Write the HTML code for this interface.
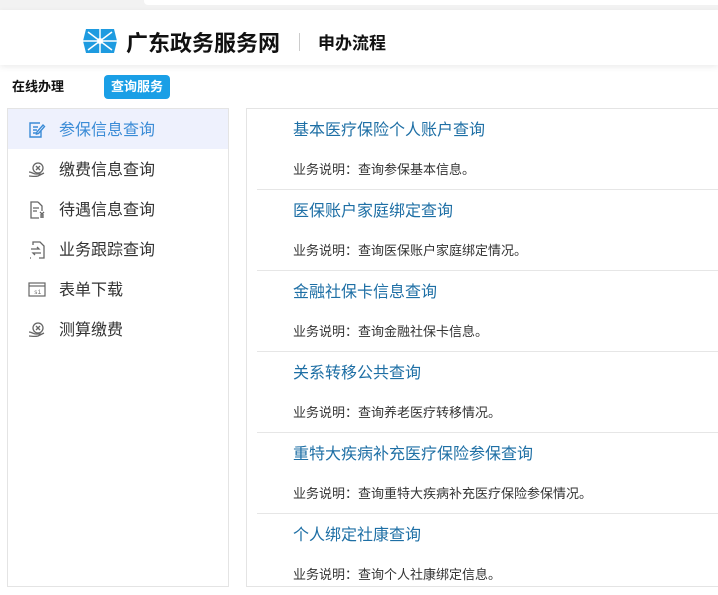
<!DOCTYPE html>
<html><head><meta charset="utf-8">
<style>
*{margin:0;padding:0;box-sizing:border-box}
body{width:718px;height:589px;overflow:hidden;background:#fff;font-family:"Liberation Sans","Noto Sans CJK SC",sans-serif;position:relative}
.top{position:absolute;left:0;top:0;width:718px;height:10px;background:#f2f2f2}
.top .b{position:absolute;left:144px;top:0;right:0;height:5px;background:#fff;border-radius:0 0 0 4px}
.hdr{position:absolute;left:0;top:10px;width:718px;height:55px;background:#fff;box-shadow:0 2px 6px rgba(0,0,0,.08)}
.logo{position:absolute;left:83px;top:19px}
.t1{position:absolute;left:126px;top:16px;font-size:22px;font-weight:bold;color:#111}
.sep{position:absolute;left:299px;top:23px;width:1px;height:18px;background:#ccc}
.t2{position:absolute;left:318px;top:19px;font-size:17px;font-weight:bold;color:#111}
.tab1{position:absolute;left:12px;top:76px;font-size:13px;font-weight:bold;color:#111}
.tab2{position:absolute;left:104px;top:75px;width:66px;height:24px;background:#1a9fe6;border-radius:4px;color:#fff;font-size:13px;font-weight:bold;text-align:center;line-height:24px}
.side{position:absolute;left:7px;top:108px;width:222px;height:479px;border:1px solid #e4e4e4}
.it{height:40px;position:relative;font-size:16px;color:#333;line-height:44px;padding-left:51px}
.it.on{background:#eef1fd;color:#3a8bd6}
.it svg{position:absolute;left:20px;top:12px}
.main{position:absolute;left:246px;top:108px;width:480px;height:479px;border:1px solid #e4e4e4;border-right:none}
.row{position:absolute;left:10px;width:470px;height:81px;border-bottom:1px solid #e6e6e6}
.row .h{position:absolute;left:36px;top:7px;font-size:16px;color:#1e6fa5}
.row .d{position:absolute;left:36px;top:50px;font-size:13px;color:#333}
</style></head><body>
<div class="top"><div class="b"></div></div>
<div class="hdr">
<svg class="logo" width="34" height="24" viewBox="0 0 34 24"><polygon points="3,0 31,0 34,12 31,24 3,24 0,12" fill="#1e9be0"/><g stroke="#fff" stroke-width="1.5"><line x1="17" y1="0" x2="17" y2="24"/><line x1="5" y1="3" x2="29" y2="21"/><line x1="29" y1="3" x2="5" y2="21"/><line x1="0" y1="12" x2="34" y2="12"/></g><circle cx="17" cy="12" r="3" fill="#fff"/></svg>
<div class="t1">广东政务服务网</div>
<div class="sep"></div>
<div class="t2">申办流程</div>
</div>
<div class="tab1">在线办理</div>
<div class="tab2">查询服务</div>
<div class="side">
<div class="it on"><svg width="18" height="18" viewBox="0 0 18 18" fill="none" stroke="#3a8bd6" stroke-width="1.4"><path d="M12 2H2v14h11V10"/><path d="M5 6h5M5 9h4M5 12h4"/><path d="M9 11l6-7 1.5 1.5-6 7-2 .5z"/></svg>参保信息查询</div>
<div class="it"><svg width="18" height="18" viewBox="0 0 18 18" fill="none" stroke="#666" stroke-width="1.3"><circle cx="10" cy="7" r="5"/><path d="M8 5l4 4M12 5l-4 4"/><path d="M1 11c3 0 4 2 7 2h5M1 15c3 0 5 1 9 0l6-3"/></svg>缴费信息查询</div>
<div class="it"><svg width="18" height="18" viewBox="0 0 18 18" fill="none" stroke="#666" stroke-width="1.3"><path d="M10 1H3v16h8M10 1l4 4v5"/><path d="M5 7h6M5 10h4"/><path d="M12 11l2 2 2-2M14 13v4M12 14h4M12 16h4"/></svg>待遇信息查询</div>
<div class="it"><svg width="18" height="18" viewBox="0 0 18 18" fill="none" stroke="#666" stroke-width="1.3"><path d="M5 4V1h7l4 4v12h-5M3 17H2"/><path d="M3 8h8l-2-2M13 12H5l2 2"/></svg>业务跟踪查询</div>
<div class="it"><svg width="18" height="18" viewBox="0 0 18 18" fill="none" stroke="#666" stroke-width="1.2"><rect x="1" y="2" width="16" height="13"/><path d="M1 5h16"/><text x="6" y="13" font-size="6" fill="#666" stroke="none" font-family="Liberation Mono">si</text></svg>表单下载</div>
<div class="it"><svg width="18" height="18" viewBox="0 0 18 18" fill="none" stroke="#666" stroke-width="1.3"><circle cx="10" cy="7" r="5"/><path d="M8 5l4 4M12 5l-4 4"/><path d="M1 11c3 0 4 2 7 2h5M1 15c3 0 5 1 9 0l6-3"/></svg>测算缴费</div>
</div>
<div class="main">
<div class="row" style="top:0"><div class="h">基本医疗保险个人账户查询</div><div class="d">业务说明：查询参保基本信息。</div></div>
<div class="row" style="top:81px"><div class="h">医保账户家庭绑定查询</div><div class="d">业务说明：查询医保账户家庭绑定情况。</div></div>
<div class="row" style="top:162px"><div class="h">金融社保卡信息查询</div><div class="d">业务说明：查询金融社保卡信息。</div></div>
<div class="row" style="top:243px"><div class="h">关系转移公共查询</div><div class="d">业务说明：查询养老医疗转移情况。</div></div>
<div class="row" style="top:324px"><div class="h">重特大疾病补充医疗保险参保查询</div><div class="d">业务说明：查询重特大疾病补充医疗保险参保情况。</div></div>
<div class="row" style="top:405px;border:none"><div class="h">个人绑定社康查询</div><div class="d">业务说明：查询个人社康绑定信息。</div></div>
</div>
</body></html>
